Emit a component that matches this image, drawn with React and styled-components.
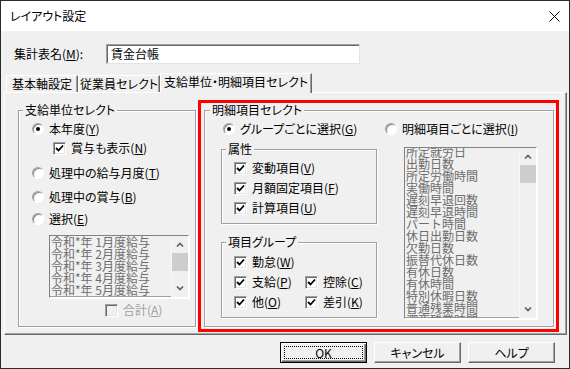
import React from 'react'
import styled, { createGlobalStyle } from 'styled-components'

const GlobalStyle = createGlobalStyle`
  html, body {
    margin: 0;
    padding: 0;
    background: #fff;
  }
  body {
    font-family: "Noto Sans CJK JP", "Noto Sans", sans-serif;
    font-size: 12px;
    color: #000;
    font-feature-settings: "palt";
  }
`

const Window = styled.div`
  width: 570px;
  height: 369px;
  box-sizing: border-box;
  border: 1px solid #2b2b2b;
  background: #f0f0f0;
  display: flex;
  flex-direction: column;
`

const TitleBar = styled.div`
  height: 30px;
  background: #fff;
  display: flex;
  align-items: center;
  justify-content: space-between;
  padding: 0 9px 0 9px;
  line-height: 16px;
`

const Body = styled.div`
  flex: 1;
  display: flex;
  flex-direction: column;
`

const NameRow = styled.div`
  display: flex;
  align-items: center;
  height: 20px;
  margin-top: 13px;
  padding-left: 13px;
  line-height: 16px;
`

const NameLabel = styled.span`
  width: 92px;
`

const NameInput = styled.div`
  width: 254px;
  height: 20px;
  box-sizing: border-box;
  border: 1px solid;
  border-color: #a0a0a0 #e3e3e3 #e3e3e3 #a0a0a0;
  box-shadow: inset 1px 1px #696969;
  background: #fff;
  padding-left: 4px;
  display: flex;
  align-items: center;
`

const TabStrip = styled.div`
  display: flex;
  align-items: flex-end;
  height: 19px;
  margin-top: 9px;
  padding-left: 5px;
  position: relative;
  z-index: 1;
`

const Tab = styled.div`
  width: ${p => p.$w}px;
  height: ${p => (p.$active ? 20 : 17)}px;
  margin-bottom: ${p => (p.$active ? -1 : 0)}px;
  padding-bottom: ${p => (p.$active ? 3 : 0)}px;
  box-sizing: border-box;
  display: flex;
  align-items: center;
  justify-content: center;
  border-top: 1px solid #fff;
  border-left: 1px solid #fff;
  border-right: 1px solid #696969;
  box-shadow: inset -1px 0 #a0a0a0;
  background: #f0f0f0;
  line-height: 14px;
  white-space: nowrap;
`

const Panel = styled.div`
  margin-left: 3px;
  width: 563px;
  height: 243px;
  box-sizing: border-box;
  border: 1px solid;
  border-color: #fff #696969 #696969 #fff;
  box-shadow: inset -1px -1px #a0a0a0;
  padding: 7px 0 0 13px;
  display: flex;
  align-items: flex-start;
  gap: 2px;
`

const GroupBox = styled.fieldset`
  margin: ${p => p.$mt || 0}px 0 0 0;
  padding: 0;
  min-width: 0;
  width: ${p => p.$w}px;
  height: ${p => p.$h}px;
  box-sizing: border-box;
  border: 1px solid #a0a0a0;
  box-shadow: 1px 1px #fff, inset 1px 1px #fff;
`

const Legend = styled.legend`
  margin-left: ${p => p.$ml || 4}px;
  padding: 0 2px;
  line-height: 14px;
  background: #f0f0f0;
`

const GroupContent = styled.div`
  padding: ${p => p.$pt || 4}px 0 0 ${p => p.$pl || 0}px;
  display: flex;
  flex-direction: ${p => (p.$row ? 'row' : 'column')};
  gap: ${p => p.$gap || 0}px;
`

const RedFrame = styled.div`
  width: 361px;
  height: 232px;
  box-sizing: border-box;
  border: 3px solid #ff0000;
  padding: 0 2px 2px 3px;
  display: flex;
`

const Column = styled.div`
  width: ${p => p.$w}px;
  display: flex;
  flex-direction: column;
`

const Row = styled.div`
  display: flex;
  align-items: center;
  height: 16px;
  margin-top: ${p => p.$mt || 0}px;
  margin-left: ${p => p.$indent || 0}px;
  gap: ${p => p.$gap ?? 5}px;
  color: ${p => (p.$disabled ? '#a0a0a0' : '#000')};
  line-height: 16px;
  white-space: nowrap;
`

const CheckGrid = styled.div`
  display: grid;
  grid-template-columns: 71px auto;
  row-gap: 4px;
  padding-left: 12px;
`

const RadioCircle = styled.span`
  width: 12px;
  height: 12px;
  box-sizing: border-box;
  border-radius: 50%;
  border: 1px solid;
  border-color: #a0a0a0 #fff #fff #a0a0a0;
  box-shadow: inset 1px 1px #8a8a8a;
  background: #fff;
  display: flex;
  align-items: center;
  justify-content: center;
  flex-shrink: 0;
`

const RadioDot = styled.span`
  width: 4px;
  height: 4px;
  border-radius: 50%;
  background: #000;
`

const CheckBox = styled.span`
  width: 13px;
  height: 13px;
  box-sizing: border-box;
  border: 1px solid;
  border-color: #a0a0a0 #fff #fff #a0a0a0;
  box-shadow: inset 1px 1px #696969, inset -1px -1px #e3e3e3;
  background: ${p => (p.$disabled ? '#f0f0f0' : '#fff')};
  display: flex;
  align-items: center;
  justify-content: center;
  flex-shrink: 0;
`

const ListBox = styled.div`
  width: ${p => p.$w}px;
  height: ${p => p.$h}px;
  margin-top: ${p => p.$mt || 0}px;
  margin-left: ${p => p.$ml || 0}px;
  box-sizing: border-box;
  border: 1px solid;
  border-color: #828282 #fff #fff #828282;
  box-shadow: 1px 1px #fff, inset -1px -1px #a0a0a0;
  background: #f0f0f0;
  display: flex;
  overflow: hidden;
`

const ListItems = styled.div`
  flex: 1;
  overflow: hidden;
  padding-left: 1px;
`

const ListScroll = styled.div`
  margin-top: ${p => p.$offset || 0}px;
`

const ListItem = styled.div`
  height: 12px;
  line-height: 12px;
  font-size: 12px;
  color: #6d6d6d;
  white-space: pre;
  font-feature-settings: normal;
`

const ScrollBar = styled.div`
  width: 16px;
  display: flex;
  flex-direction: column;
  border-left: 1px solid #f6f6f6;
  background: #f0f0f0;
`

const ScrollArrow = styled.div`
  height: 17px;
  display: flex;
  align-items: center;
  justify-content: center;
  flex-shrink: 0;
`

const ScrollThumb = styled.div`
  height: 18px;
  background: #cdcdcd;
  flex-shrink: 0;
`

const ScrollTrack = styled.div`
  flex: 1;
`

const ButtonRow = styled.div`
  display: flex;
  justify-content: flex-end;
  gap: 7px;
  margin-top: 7px;
  padding-right: 14px;
`

const Button = styled.div`
  position: relative;
  width: 87px;
  height: 21px;
  box-sizing: border-box;
  border: 1px solid;
  border-color: ${p => (p.$primary ? '#000' : '#fff #696969 #696969 #fff')};
  box-shadow: ${p =>
    p.$primary
      ? 'inset 1px 1px #fff, inset -1px -1px #696969, inset -2px -2px #a0a0a0'
      : 'inset -1px -1px #a0a0a0'};
  background: #f0f0f0;
  display: flex;
  align-items: center;
  justify-content: center;
  line-height: 14px;

  &::after {
    content: '';
    display: ${p => (p.$primary ? 'block' : 'none')};
    position: absolute;
    inset: 3px;
    border: 1px dotted #000;
  }
`

const Chevron = ({ up }) => (
  <svg width="8" height="5" viewBox="0 0 8 5">
    <polyline
      points={up ? '1,4.5 4,1.5 7,4.5' : '1,0.5 4,3.5 7,0.5'}
      fill="none"
      stroke="#5f5f5f"
      strokeWidth="1.6"
    />
  </svg>
)

const Tick = () => (
  <svg width="9" height="9" viewBox="0 0 9 9">
    <polyline points="1,4 3.5,6.5 8,1.5" fill="none" stroke="#000" strokeWidth="1.8" />
  </svg>
)

function Radio({ checked, children, mt, indent }) {
  return (
    <Row $mt={mt} $indent={indent}>
      <RadioCircle>{checked && <RadioDot />}</RadioCircle>
      <span>{children}</span>
    </Row>
  )
}

function Check({ checked, disabled, children, mt, indent }) {
  return (
    <Row $mt={mt} $indent={indent} $disabled={disabled}>
      <CheckBox $disabled={disabled}>{checked && <Tick />}</CheckBox>
      <span>{children}</span>
    </Row>
  )
}

function List({ items, w, h, mt, ml, offset }) {
  return (
    <ListBox $w={w} $h={h} $mt={mt} $ml={ml}>
      <ListItems>
        <ListScroll $offset={offset}>
          {items.map(item => (
            <ListItem key={item}>{item}</ListItem>
          ))}
        </ListScroll>
      </ListItems>
      <ScrollBar>
        <ScrollArrow>
          <Chevron up />
        </ScrollArrow>
        <ScrollThumb />
        <ScrollTrack />
        <ScrollArrow>
          <Chevron />
        </ScrollArrow>
      </ScrollBar>
    </ListBox>
  )
}

const payItems = [
  '令和*年 1月度給与',
  '令和*年 2月度給与',
  '令和*年 3月度給与',
  '令和*年 4月度給与',
  '令和*年 5月度給与',
]

const detailItems = [
  '所定就労日',
  '出勤日数',
  '所定労働時間',
  '実働時間',
  '遅刻早退回数',
  '遅刻早退時間',
  'パート時間',
  '休日出勤日数',
  '欠勤日数',
  '振替代休日数',
  '有休日数',
  '有休時間',
  '特別休暇日数',
  '普通残業時間',
  '深夜残業時間',
]

export default function App() {
  return (
    <>
      <GlobalStyle />
      <Window>
        <TitleBar>
          <span>レイアウト設定</span>
          <svg width="11" height="11" viewBox="0 0 11 11">
            <path d="M0.5 0.5 L10.5 10.5 M10.5 0.5 L0.5 10.5" stroke="#000" strokeWidth="1" />
          </svg>
        </TitleBar>
        <Body>
          <NameRow>
            <NameLabel>
              集計表名(<u>M</u>):
            </NameLabel>
            <NameInput>賃金台帳</NameInput>
          </NameRow>

          <TabStrip>
            <Tab $w={72}>基本軸設定</Tab>
            <Tab $w={82}>従業員セレクト</Tab>
            <Tab $w={152} $active>
              支給単位・明細項目セレクト
            </Tab>
          </TabStrip>

          <Panel>
            <GroupBox $w={178} $h={224} $mt={3}>
              <Legend $ml={4}>支給単位セレクト</Legend>
              <GroupContent $pl={13}>
                <Radio checked>
                  本年度(<u>Y</u>)
                </Radio>
                <Check checked mt={3} indent={21}>
                  賞与も表示(<u>N</u>)
                </Check>
                <Radio mt={9}>
                  処理中の給与月度(<u>T</u>)
                </Radio>
                <Radio mt={8}>
                  処理中の賞与(<u>B</u>)
                </Radio>
                <Radio mt={6}>
                  選択(<u>E</u>)
                </Radio>
                <List items={payItems} w={140} h={63} mt={8} ml={17} />
                <Check disabled mt={4} indent={73}>
                  合計(<u>A</u>)
                </Check>
              </GroupContent>
            </GroupBox>

            <RedFrame>
              <GroupBox $w={350} $h={224}>
                <Legend $ml={5}>明細項目セレクト</Legend>
                <GroupContent $row $pl={16} $gap={8}>
                  <Column $w={156}>
                    <Row $indent={2}>
                      <RadioCircle>
                        <RadioDot />
                      </RadioCircle>
                      <span>
                        グループごとに選択(<u>G</u>)
                      </span>
                    </Row>
                    <GroupBox $w={156} $h={82} $mt={5}>
                      <Legend $ml={4}>属性</Legend>
                      <GroupContent $pl={12} $gap={4}>
                        <Check checked>
                          変動項目(<u>V</u>)
                        </Check>
                        <Check checked>
                          月額固定項目(<u>F</u>)
                        </Check>
                        <Check checked>
                          計算項目(<u>U</u>)
                        </Check>
                      </GroupContent>
                    </GroupBox>
                    <GroupBox $w={156} $h={83} $mt={11}>
                      <Legend $ml={4}>項目グループ</Legend>
                      <GroupContent $pt={5}>
                        <CheckGrid>
                          <Check checked>
                            勤怠(<u>W</u>)
                          </Check>
                          <span />
                          <Check checked>
                            支給(<u>P</u>)
                          </Check>
                          <Check checked>
                            控除(<u>C</u>)
                          </Check>
                          <Check checked>
                            他(<u>O</u>)
                          </Check>
                          <Check checked>
                            差引(<u>K</u>)
                          </Check>
                        </CheckGrid>
                      </GroupContent>
                    </GroupBox>
                  </Column>
                  <Column $w={152}>
                    <Radio>
                      明細項目ごとに選択(<u>I</u>)
                    </Radio>
                    <List items={detailItems} w={133} h={172} mt={10} ml={19} offset={-2} />
                  </Column>
                </GroupContent>
              </GroupBox>
            </RedFrame>
          </Panel>

          <ButtonRow>
            <Button $primary>OK</Button>
            <Button>キャンセル</Button>
            <Button>ヘルプ</Button>
          </ButtonRow>
        </Body>
      </Window>
    </>
  )
}
